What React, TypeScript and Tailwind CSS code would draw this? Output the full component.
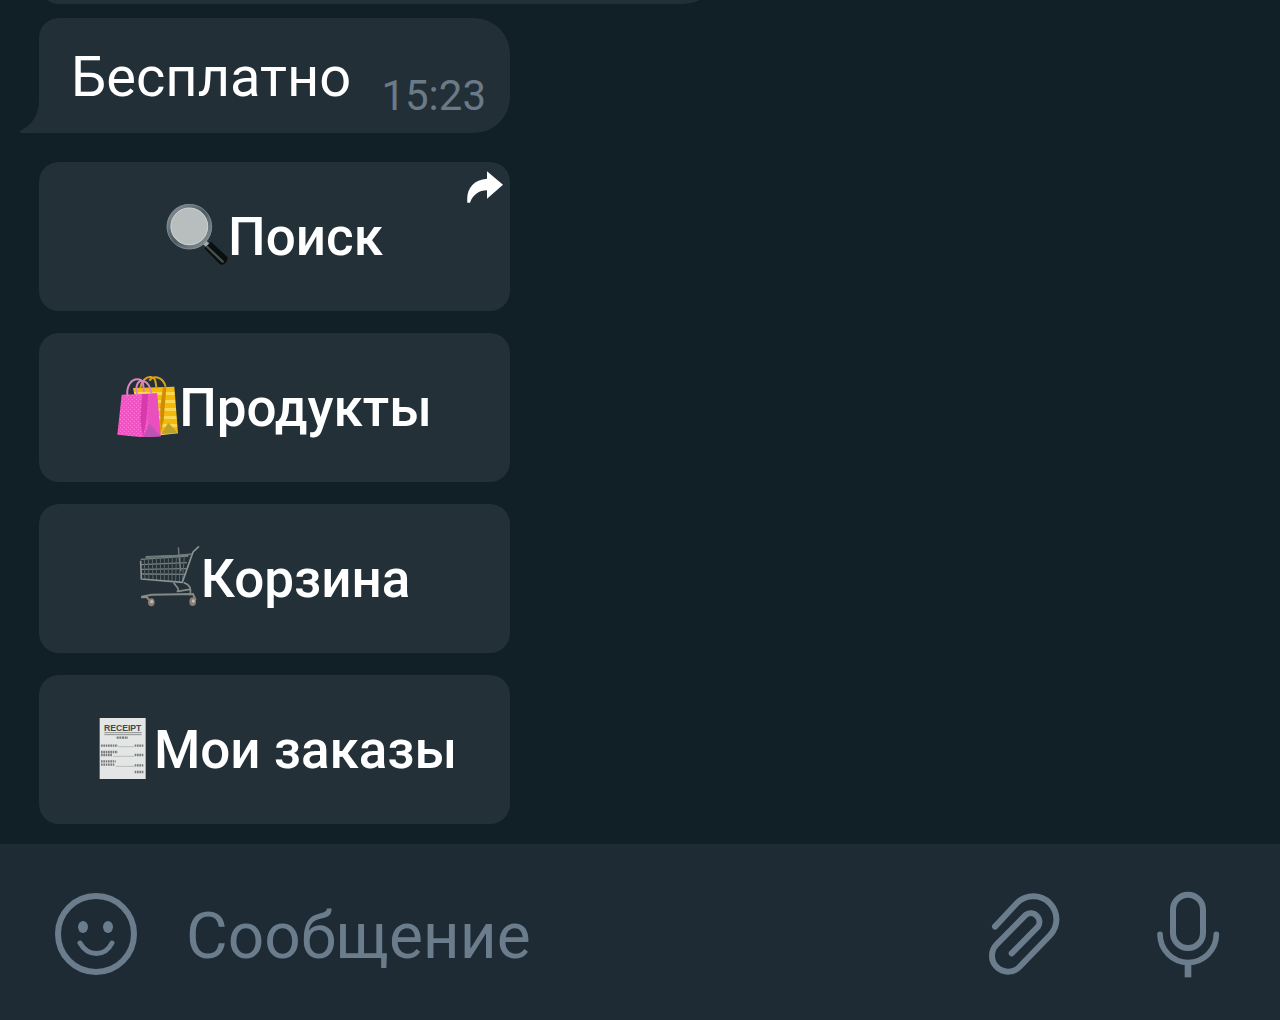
import type { ReactNode } from "react";

function SearchEmoji() {
  return (
    <svg viewBox="42 45 186 186" className="mb-[3px] size-[62px] shrink-0" aria-hidden="true">
      <defs>
        <linearGradient id="rim" x1="0" y1="0" x2="1" y2="1">
          <stop offset="0" stopColor="#89949a" />
          <stop offset="0.5" stopColor="#4d5a61" />
          <stop offset="1" stopColor="#8b969a" />
        </linearGradient>
      </defs>
      <path d="M154 156L170 172" stroke="#a3aaac" strokeWidth="14" />
      <path d="M157 178L177 158L226 204Q229 213 220 222Q210 231 203 225Z" fill="#0a0e0f" />
      <path d="M166 174L212 218" stroke="#46524f" strokeWidth="7" strokeLinecap="round" />
      <circle cx="112" cy="113" r="62" fill="#b9bebf" stroke="url(#rim)" strokeWidth="12" />
      <circle cx="112" cy="113" r="67" fill="none" stroke="#87949a" strokeWidth="2" />
      <circle cx="112" cy="112" r="55" fill="#b8bdbd" stroke="#cbd0d0" strokeWidth="3" />
    </svg>
  );
}

function BagsEmoji() {
  return (
    <svg viewBox="48 45 186 186" className="mb-[3px] size-[62px] shrink-0" aria-hidden="true">
      <defs>
        <pattern id="dots" width="12" height="12" patternUnits="userSpaceOnUse">
          <rect width="12" height="12" fill="#ef53c1" />
          <circle cx="4" cy="4" r="2" fill="#ff86d8" />
          <circle cx="10" cy="10" r="2" fill="#ff86d8" />
        </pattern>
        <pattern id="stripes" width="20" height="24" patternUnits="userSpaceOnUse">
          <rect width="20" height="24" fill="#f4b90d" />
          <rect width="20" height="9" fill="#fbd751" />
        </pattern>
      </defs>
      <path d="M96 84L220 80L231 220L178 226L120 200Z" fill="url(#stripes)" />
      <path d="M186 82H196L188 180L178 222V140Z" fill="#cf8b04" />
      <path d="M180 222L202 188L231 220Z" fill="#bda329" />
      <path d="M118 84C122 62 136 49 150 51S164 65 166 82M145 62C155 47 184 46 194 80" fill="none" stroke="#d9a21d" strokeWidth="6" />
      <path d="M62 104L168 100L179 229L126 232L49 224Z" fill="url(#dots)" />
      <path d="M124 102H142L136 180L126 232L118 180Z" fill="#d63aad" />
      <path d="M142 102L168 100L179 229L142 190Z" fill="#e94fbd" />
      <path d="M126 232L145 190L179 229Z" fill="#bd54b3" />
      <path d="M79 108C76 76 92 57 110 58S126 70 129 96M109 106C100 70 116 59 128 63S148 79 151 100" fill="none" stroke="#d886be" strokeWidth="6" />
    </svg>
  );
}

function CartEmoji() {
  return (
    <svg viewBox="42 36 186 186" className="mb-[3px] size-[62px] shrink-0" fill="none" aria-hidden="true">
      <path d="M47 76L190 66M48 92L186 86M49 106L183 104M50 120L180 121M62 70L195 62" stroke="#7b8485" strokeWidth="4" />
      <path
        d="M58 78L60 136M70 74L72 137M82 73L84 138M94 71L95 139M106 70L107 140M118 69L118 141M130 68L130 142M142 67L141 143M154 67L152 143M166 66L163 144M178 66L172 144"
        stroke="#5c676a"
        strokeWidth="3"
      />
      <path d="M47 80L49 135L172 145L204 54L222 37" stroke="#8d9292" strokeWidth="5" strokeLinejoin="round" />
      <path d="M160 40L163 78L168 112M62 68L160 64L200 60" stroke="#707b7d" strokeWidth="4" />
      <path d="M146 146C154 160 166 163 156 174M176 146C190 150 202 160 194 184M158 172L194 166" stroke="#858b8b" strokeWidth="5" />
      <path d="M50 188L80 182L204 180L212 198M62 186L76 202" stroke="#858988" strokeWidth="6" />
      <ellipse cx="79" cy="205" rx="10" ry="12" fill="#8c7c72" />
      <ellipse cx="203" cy="203" rx="10" ry="13" fill="#8c7c72" />
      <circle cx="80" cy="203" r="5" fill="#c4b8b0" />
      <circle cx="205" cy="201" r="5" fill="#c4b8b0" />
      <path d="M48 190L66 189" stroke="#9b8c80" strokeWidth="6" />
    </svg>
  );
}

function ReceiptEmoji() {
  return (
    <svg viewBox="27 36 186 186" className="mb-[3px] size-[62px] shrink-0" aria-hidden="true">
      <path d="M50 39H188V222H50Z" fill="#e4e6e6" />
      <text x="119" y="77" textAnchor="middle" fontSize="26" fontWeight="700" fill="#44484a" className="font-['Liberation_Sans',sans-serif]">
        RECEIPT
      </text>
      <path d="M64 83H176M64 89H176" stroke="#8d9192" strokeWidth="3" />
      <path d="M101 98H135" stroke="#777b7c" strokeWidth="7" strokeDasharray="6 2" />
      <path
        d="M54 122H104M54 141H104M54 150H88M54 169H98M54 179H96M155 122H182M155 150H182M155 181H182M155 201H182"
        stroke="#777b7d"
        strokeWidth="7"
        strokeDasharray="5 2"
      />
      <path d="M106 125H153M90 154H153M98 184H153" stroke="#a4a8a9" strokeWidth="2" />
    </svg>
  );
}

function ShareArrow() {
  return (
    <svg viewBox="262 515 108 96" className="absolute right-[7px] top-[9px] h-8 w-9" aria-hidden="true">
      <path d="M322 516L370 556L322 598V573C298 573 280 586 271 610H263C259 568 281 541 322 538Z" fill="#fff" />
    </svg>
  );
}

const actions: { label: string; icon: ReactNode; external?: boolean }[] = [
  { label: "Поиск", icon: <SearchEmoji />, external: true },
  { label: "Продукты", icon: <BagsEmoji /> },
  { label: "Корзина", icon: <CartEmoji /> },
  { label: "Мои заказы", icon: <ReceiptEmoji /> },
];

function MessageBubble() {
  return (
    <div className="relative flex h-[115px] items-start justify-between rounded-[36px] rounded-bl-none rounded-tl-[20px] bg-[#222f37] pl-8 pr-6">
      <svg viewBox="0 0 20 32" className="absolute -left-5 bottom-0 h-8 w-5" aria-hidden="true">
        <path d="M20 0C20 14 12 25 1 30Q0 32 4 32H20Z" fill="#222f37" />
      </svg>
      <p className="pt-[27px] text-[56px] leading-[64px] text-white">Бесплатно</p>
      <time className="pt-[54px] text-[42px] leading-[48px] text-[#6a7a87]">15:23</time>
    </div>
  );
}

function Composer() {
  return (
    <form
      className="flex h-44 shrink-0 items-center bg-[#1e2b35] pl-[54px] pr-14 pt-1 text-[#6b7d8c]"
      onSubmit={(e) => e.preventDefault()}
    >
      <button type="button" aria-label="Эмодзи" className="shrink-0">
        <svg viewBox="0 0 84 84" className="size-[84px]" fill="none">
          <circle cx="42" cy="42" r="38" stroke="currentColor" strokeWidth="6" />
          <ellipse cx="29" cy="35" rx="5" ry="6" fill="currentColor" />
          <ellipse cx="54" cy="35" rx="5" ry="6" fill="currentColor" />
          <path d="M26 51C34 65 51 65 58 51" stroke="currentColor" strokeWidth="5" strokeLinecap="round" />
        </svg>
      </button>
      <input
        type="text"
        aria-label="Сообщение"
        placeholder="Сообщение"
        className="ml-12 h-20 min-w-0 flex-1 bg-transparent pt-[6px] text-[64px] text-white outline-none placeholder:text-[#6b7d8c]"
      />
      <button type="button" aria-label="Прикрепить" className="shrink-0">
        <svg viewBox="72 60 240 264" className="h-[88px] w-20" fill="none">
          <path
            d="M105 170L171 99A69 69 0 0 1 269 197L178 291A48 48 0 0 1 110 223L198 134A26 26 0 0 1 234 170L155 250"
            stroke="currentColor"
            strokeWidth="18"
            strokeLinecap="round"
          />
        </svg>
      </button>
      <button type="button" aria-label="Голосовое сообщение" className="ml-[88px] shrink-0">
        <svg viewBox="576 60 216 264" className="h-[88px] w-[72px]" fill="none" stroke="currentColor">
          <rect x="639" y="74" width="90" height="160" rx="45" strokeWidth="18" />
          <path d="M600 193A84 84 0 0 0 769 193" strokeWidth="17" strokeLinecap="round" />
          <path d="M684 276V322" strokeWidth="20" />
        </svg>
      </button>
    </form>
  );
}

export default function App() {
  return (
    <div className="flex h-screen flex-col overflow-hidden bg-[#111f26] font-[Roboto,sans-serif]">
      <main className="flex min-h-0 flex-1 flex-col justify-end overflow-hidden pb-5 pl-[39px]">
        <div className="mb-[14px] h-20 w-[680px] max-w-full shrink-0 rounded-[36px] rounded-bl-[20px] bg-[#222f37]" />
        <div className="w-[471px] max-w-full shrink-0">
          <MessageBubble />
          <div className="mt-[29px] flex flex-col gap-[22px]">
            {actions.map((action) => (
              <button
                key={action.label}
                type="button"
                className="relative flex h-[149px] items-center justify-center rounded-[20px] bg-[#233038] text-[53px] font-medium leading-[60px] text-white"
              >
                {action.icon}
                <span>{action.label}</span>
                {action.external && <ShareArrow />}
              </button>
            ))}
          </div>
        </div>
      </main>
      <Composer />
    </div>
  );
}
